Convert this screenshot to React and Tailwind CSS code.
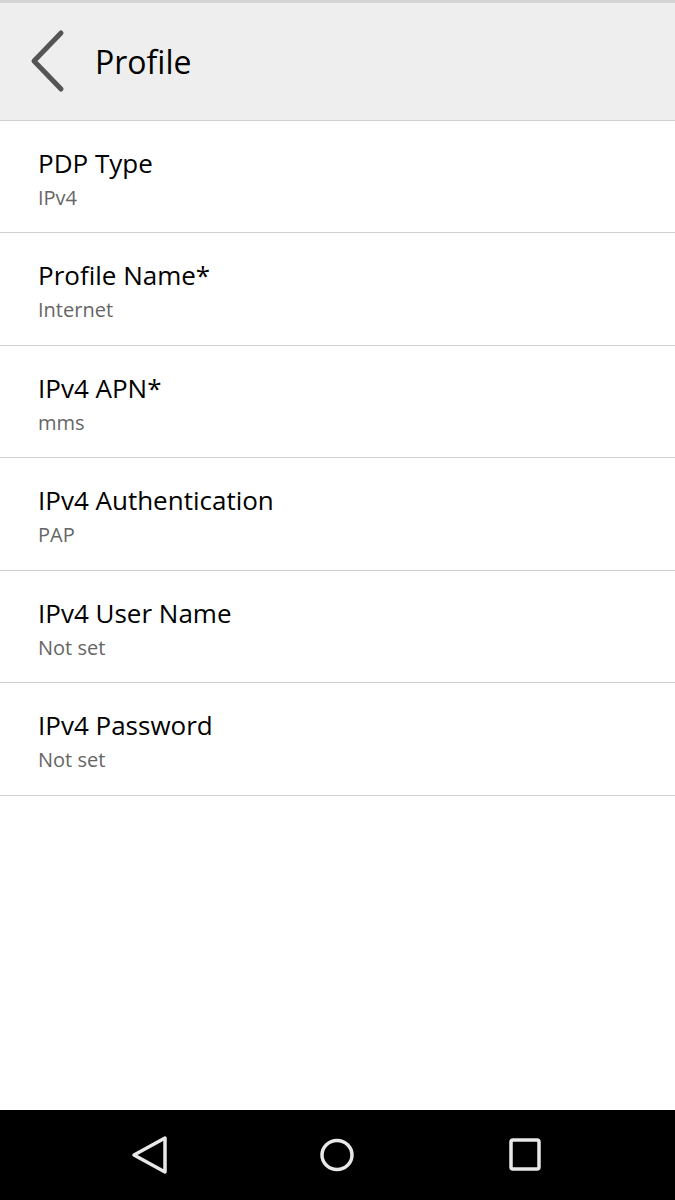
import React from "react";

const rows = [
  { t: "PDP Type", s: "IPv4", h: "h-[112px]" },
  { t: "Profile Name*", s: "Internet", h: "h-[113px]" },
  { t: "IPv4 APN*", s: "mms", h: "h-[112px]" },
  { t: "IPv4 Authentication", s: "PAP", h: "h-[113px]" },
  { t: "IPv4 User Name", s: "Not set", h: "h-[112px]" },
  { t: "IPv4 Password", s: "Not set", h: "h-[113px]" },
];

export default function App() {
  return (
    <div
      className="w-[675px] h-[1200px] bg-white flex flex-col overflow-hidden"
      style={{ fontFamily: '"Open Sans", "Noto Sans", sans-serif' }}
    >
      <header className="h-[121px] shrink-0 bg-[#eeeeee] border-t-[3px] border-t-[#d4d4d4] border-b border-b-[#d0d0d0] flex items-center">
        <svg width="40" height="66" viewBox="0 0 40 66" className="ml-[27px]">
          <path d="M34 4 L7 32 L34 60" fill="none" stroke="#555" strokeWidth="5" strokeLinecap="round" strokeLinejoin="round" />
        </svg>
        <span className="ml-[28px] text-[32px] text-black leading-none">Profile</span>
      </header>
      <main className="flex-1 flex flex-col">
        {rows.map((r) => (
          <div key={r.t} className={`${r.h} shrink-0 border-b border-[#d0d0d0] pl-[38px] flex flex-col`}>
            <div className="mt-[25px] text-[26px] leading-[34px] text-black">{r.t}</div>
            <div className="mt-[5px] text-[20px] leading-[26px] text-[#666666]">{r.s}</div>
          </div>
        ))}
      </main>
      <nav className="h-[90px] shrink-0 bg-black flex items-center pl-[129px] gap-[148px]">
        <svg width="40" height="40" viewBox="0 0 40 40" className="shrink-0">
          <path d="M36 3 L36 37 L5 20 Z" fill="none" stroke="#e8e8e8" strokeWidth="3.5" strokeLinejoin="round" />
        </svg>
        <svg width="40" height="40" viewBox="0 0 40 40" className="shrink-0">
          <ellipse cx="20" cy="20" rx="15" ry="14.5" fill="none" stroke="#e8e8e8" strokeWidth="3.5" />
        </svg>
        <svg width="40" height="40" viewBox="0 0 40 40" className="shrink-0">
          <rect x="6" y="5" width="28" height="29" rx="2" fill="none" stroke="#e8e8e8" strokeWidth="3.5" />
        </svg>
      </nav>
    </div>
  );
}
